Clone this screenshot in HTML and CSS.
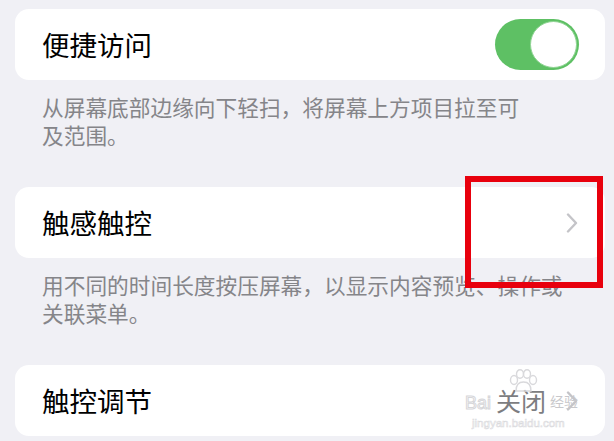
FILE: index.html
```html
<!DOCTYPE html>
<html>
	<head>
		<meta charset="UTF-8">
		<link rel="stylesheet" href="styles.css">
		<title>触控</title>
	</head>
	<body>
		<div class="page">
			<div class="cell">
				<span class="cell-title">便捷访问</span>
				<span class="switch"><span class="switch-knob"></span></span>
			</div>
			<p class="footer">从屏幕底部边缘向下轻扫，将屏幕上方项目拉至可<br>及范围。</p>

			<div class="cell">
				<span class="cell-title">触感触控</span>
				<svg class="chevron" width="12" height="20" viewBox="0 0 12 20">
					<path d="M2 1.5 L10 10 L2 18.5" fill="none" stroke="#c4c4c8" stroke-width="2.4" stroke-linecap="round" stroke-linejoin="round"/>
				</svg>
			</div>
			<p class="footer">用不同的时间长度按压屏幕，以显示内容预览、操作或<br>关联菜单。</p>

			<div class="cell cell-last">
				<span class="cell-title">触控调节</span>
				<span class="cell-value">关闭</span>
				<svg class="chevron" width="12" height="20" viewBox="0 0 12 20">
					<path d="M2 1.5 L10 10 L2 18.5" fill="none" stroke="#c4c4c8" stroke-width="2.4" stroke-linecap="round" stroke-linejoin="round"/>
				</svg>
				<div class="watermark">
					<svg class="paw" width="32" height="24" viewBox="0 0 32 24">
						<g fill="none" stroke="#d9d9dc" stroke-width="1.4">
							<ellipse cx="7" cy="11" rx="3.5" ry="4.5"/>
							<ellipse cx="13" cy="5" rx="3.5" ry="4.2"/>
							<ellipse cx="20" cy="5" rx="3.5" ry="4.2"/>
							<ellipse cx="26" cy="11" rx="3.5" ry="4.5"/>
							<path d="M9 22 C9 15 12 13 16.5 13 C21 13 24 15 24 22 Z"/>
						</g>
					</svg>
					<span class="wm-bai">Bai</span>
					<span class="wm-jy">经验</span>
					<span class="wm-url">jingyan.baidu.com</span>
				</div>
			</div>

			<div class="mark"></div>
		</div>
	</body>
</html>
```

FILE: styles.css
```css
body {
	margin: 0;
	background: #f0f0f5;
	font-family: "Noto Sans CJK SC", "Noto Sans", sans-serif;
}
.page {
	position: relative;
	padding: 9px 9px 0 15px;
	height: 432px;
	overflow: hidden;
}
.cell {
	position: relative;
	display: flex;
	align-items: center;
	height: 71px;
	padding: 0 26px 0 27px;
	background: #ffffff;
	border-radius: 14px;
}
.cell-title {
	flex: 1;
	font-size: 27.5px;
	line-height: 1;
	color: #000000;
}
.cell-value {
	font-size: 25px;
	line-height: 1;
	color: #7d7d81;
	margin-right: 20px;
}
.chevron {
	margin-right: 1px;
}
.switch {
	position: relative;
	width: 84px;
	height: 51px;
	border-radius: 26px;
	background: #5ec064;
}
.switch-knob {
	position: absolute;
	top: 2px;
	right: 2px;
	width: 45px;
	height: 45px;
	border-radius: 50%;
	background: #ffffff;
	border: 1px solid #8fd493;
}
.footer {
	margin: 13px 0 38px;
	padding-left: 27px;
	font-size: 21.7px;
	line-height: 28px;
	color: #858589;
}
.watermark {
	position: absolute;
	left: 450px;
	top: 4px;
	width: 124px;
	height: 64px;
	color: #dcdcdf;
}
.paw {
	position: absolute;
	left: 42px;
	top: 0;
}
.wm-bai {
	position: absolute;
	left: 0;
	top: 25px;
	font-family: "Liberation Sans", sans-serif;
	font-size: 18px;
	line-height: 1;
	color: transparent;
	-webkit-text-stroke: 1px #d6d6d9;
}
.wm-jy {
	position: absolute;
	left: 85px;
	top: 25px;
	font-size: 14px;
	line-height: 1;
	color: #c8c8cb;
}
.wm-url {
	position: absolute;
	left: 7px;
	top: 49px;
	font-family: "Liberation Sans", sans-serif;
	font-size: 11.5px;
	line-height: 1;
	color: transparent;
	-webkit-text-stroke: 0.6px #dadadd;
}
.mark {
	position: absolute;
	left: 465px;
	top: 176px;
	width: 126px;
	height: 100px;
	border: 6px solid #e8000d;
}
```
